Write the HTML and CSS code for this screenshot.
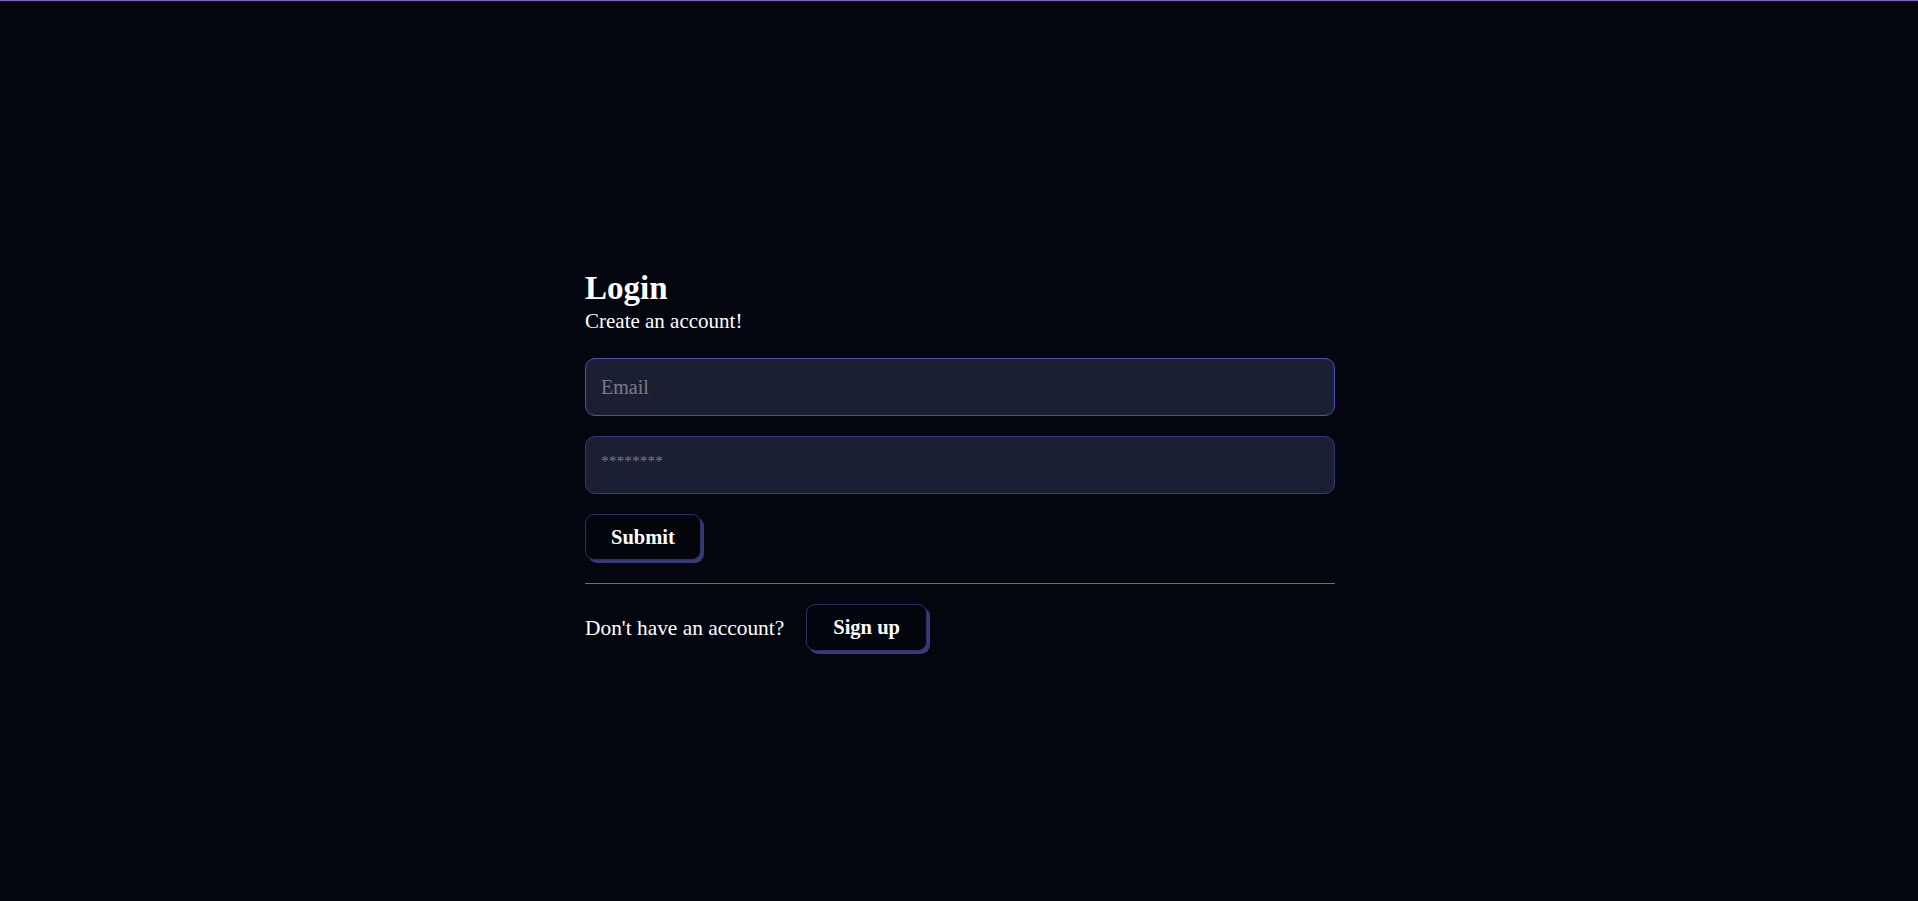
FILE: index.html
```html
<!DOCTYPE html>
<html lang="en">
<head>
<meta charset="utf-8">
<title>Login</title>
<link rel="stylesheet" href="styles.css">
</head>
<body>
<main class="page">
  <section class="card">
    <h1 class="title">Login</h1>
    <p class="subtitle">Create an account!</p>
    <form class="form">
      <input class="field field--active" type="email" placeholder="Email">
      <input class="field field--secret" type="password" placeholder="********">
      <div class="actions">
        <button class="btn" type="button">Submit</button>
      </div>
    </form>
    <hr class="divider">
    <div class="signup">
      <span class="signup-text">Don't have an account?</span>
      <button class="btn" type="button">Sign up</button>
    </div>
  </section>
</main>
</body>
</html>
```

FILE: styles.css
```css
* { box-sizing: border-box; }

html, body {
  margin: 0;
  padding: 0;
  height: 100%;
}

body {
  background: #04060f;
  color: #ffffff;
  font-family: "Liberation Serif", "DejaVu Serif", serif;
  border-top: 1px solid #8a5cc6;
}

.page {
  display: flex;
  justify-content: center;
  padding-top: 268px;
  padding-left: 2px;
}

.card {
  width: 750px;
  display: flex;
  flex-direction: column;
}

.title {
  margin: 0;
  font-size: 33px;
  line-height: 38px;
  font-weight: 700;
}

.subtitle {
  margin: 2px 0 0;
  font-size: 21px;
  line-height: 24px;
}

.form {
  margin-top: 25px;
  display: flex;
  flex-direction: column;
  gap: 20px;
}

.field {
  width: 100%;
  height: 58px;
  padding: 0 15px;
  background: #1b1f33;
  border: 1px solid #363a7c;
  border-radius: 10px;
  color: #ffffff;
  font-family: "Liberation Serif", "DejaVu Serif", serif;
  font-size: 20px;
  outline: none;
}

.field--active {
  border-color: #4a4fb6;
}

.field::placeholder {
  color: #7a7b82;
}

.field--secret {
  padding-bottom: 12px;
}

.field--secret::placeholder {
  font-size: 15.5px;
}

.actions {
  display: flex;
}

.btn {
  height: 46px;
  padding: 0 25px;
  background: #03050c;
  color: #ffffff;
  border: 1px solid #2c3068;
  border-radius: 9px;
  box-shadow: 3px 3px 0 #363a78;
  font-family: "Liberation Serif", "DejaVu Serif", serif;
  font-size: 20.5px;
  font-weight: 700;
  cursor: pointer;
}

.divider {
  margin: 23px 0 0;
  border: 0;
  height: 1px;
  background: #6e6e72;
}

.signup {
  margin-top: 20px;
  display: flex;
  align-items: center;
  gap: 22px;
}

.signup .btn {
  height: 47px;
  padding: 0 26px;
}

.signup-text {
  font-size: 21.4px;
  line-height: 24px;
}
```
